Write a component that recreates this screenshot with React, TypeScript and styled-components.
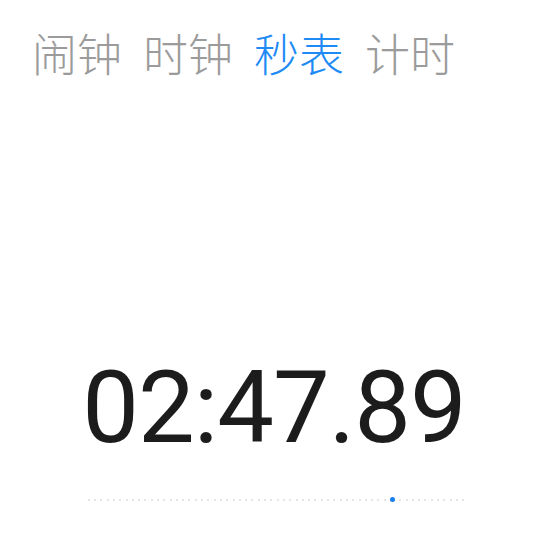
import styled, { createGlobalStyle } from "styled-components";

const GlobalStyle = createGlobalStyle`
    html, body {
        margin: 0;
        padding: 0;
        background: #ffffff;
    }
`;

const Page = styled.div`
    width: 544px;
    height: 552px;
    display: flex;
    flex-direction: column;
    align-items: center;
    overflow: hidden;
`;

const Tabs = styled.nav`
    display: flex;
    gap: 21px;
    width: 100%;
    padding: 0 0 0 32px;
    margin-top: 30px;
    box-sizing: border-box;
`;

const Tab = styled.span<{ $active?: boolean }>`
    font-family: "Noto Sans CJK SC", sans-serif;
    font-size: 45px;
    line-height: 1;
    font-weight: 300;
    color: ${props => (props.$active ? "#1e8af5" : "#9b9b9b")};
`;

const Time = styled.div`
    margin-top: 282px;
    margin-left: 4px;
    font-family: Roboto, "Liberation Sans", sans-serif;
    font-size: 101px;
    line-height: 1;
    color: #1c1c1c;
    letter-spacing: -1px;
`;

const Dots = styled.div`
    margin-top: 39px;
    margin-left: 8px;
    display: flex;
    align-items: center;
    gap: 4.3px;
`;

const Dot = styled.span<{ $active?: boolean }>`
    width: ${props => (props.$active ? "5px" : "2px")};
    height: ${props => (props.$active ? "5px" : "2px")};
    border-radius: 50%;
    background: ${props => (props.$active ? "#1a7ff0" : "#dcdcdc")};
`;

const tabs = ["闹钟", "时钟", "秒表", "计时"];

function App() {
    const dots = Array.from({ length: 60 }, (_, i) => i);
    return (
        <Page>
            <GlobalStyle />
            <Tabs>
                {tabs.map(t => (
                    <Tab key={t} $active={t === "秒表"}>{t}</Tab>
                ))}
            </Tabs>
            <Time>02:47.89</Time>
            <Dots>
                {dots.map(i => (
                    <Dot key={i} $active={i === 48} />
                ))}
            </Dots>
        </Page>
    );
}

export default App;
